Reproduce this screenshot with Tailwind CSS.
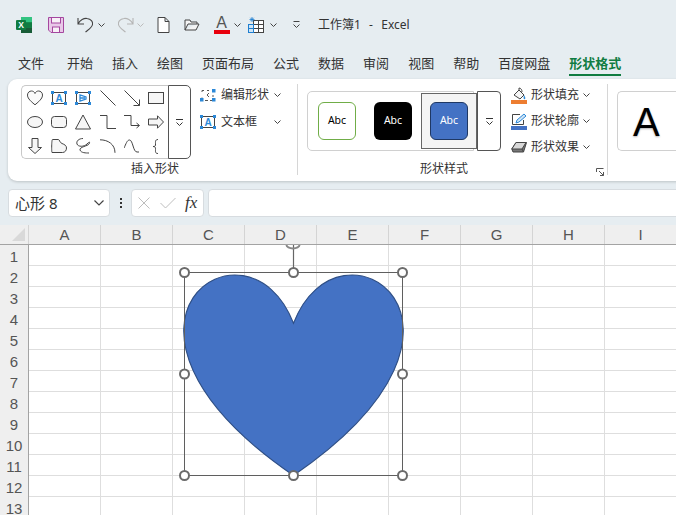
<!DOCTYPE html>
<html lang="zh-CN">
<head>
<meta charset="utf-8">
<script src="https://cdn.jsdelivr.net/npm/@tailwindcss/browser@4"></script>
</head>
<body class="m-0 overflow-hidden">
<div class="w-[676px] h-[515px] overflow-hidden flex flex-col bg-[#e6edf1] text-[#333] [font-family:'Noto_Sans','Noto_Sans_CJK_SC',sans-serif]">

  <!-- title bar -->
  <div class="h-[48px] flex items-center pl-[16px] pt-[1px] shrink-0">
    <svg class="w-[16px] h-[16px]" viewBox="0 0 16 16"><rect x="5" y="0" width="11" height="16" rx="1" fill="#21a366"/><rect x="5" y="0" width="11" height="5.3" fill="#33c481"/><rect x="5" y="5.3" width="11" height="5.4" fill="#107c41"/><rect x="5" y="10.7" width="11" height="5.3" fill="#185c37"/><rect x="0" y="3" width="10" height="10" rx="1" fill="#107c41"/><text x="5" y="11" font-size="8.5" font-weight="700" fill="#fff" text-anchor="middle" font-family="Liberation Sans">X</text></svg>
    <svg class="w-[16px] h-[16px] ml-[16px]" viewBox="0 0 16 16"><path d="M.5.500h15v15H3L.5 13z" fill="#e8c8e8" stroke="#a5479f"/><rect x="3.500" y=".5" width="9" height="5.500" fill="#f7f0f7" stroke="#a5479f"/><rect x="4.500" y="10" width="7" height="5.500" fill="#f7f0f7" stroke="#a5479f"/></svg>
    <svg class="w-[16px] h-[16px] ml-[13px]" viewBox="0 0 16 16" fill="none" stroke="#444" stroke-width="1.100"><path d="M1 1v6h6M1 7C3 3 7 1 10 1.500c4 .5 6 3 5.500 6-.5 3-4 5-7 7.500"/></svg>
    <svg class="w-[7px] h-[4px] ml-[5px]" viewBox="0 0 7 4" fill="none" stroke="#444"><path d="M.5.500 3.500 3.500 6.500.5"/></svg>
    <svg class="w-[16px] h-[16px] ml-[13px]" viewBox="0 0 16 16" fill="none" stroke="#b5b5b5" stroke-width="1.100"><path d="M15 1v6H9M15 7C13 3 9 1 6 1.500c-4 .5-6 3-5.500 6 .5 3 4 5 7 7.500"/></svg>
    <svg class="w-[7px] h-[4px] ml-[3px]" viewBox="0 0 7 4" fill="none" stroke="#bbb"><path d="M.5.500 3.500 3.500 6.500.5"/></svg>
    <svg class="w-[13px] h-[16px] ml-[13px]" viewBox="0 0 13 16" fill="#fff" stroke="#444"><path d="M1 .5h7l4 4v11H1zM8 .5v4h4"/></svg>
    <svg class="w-[16px] h-[12px] ml-[14px]" viewBox="0 0 16 12" fill="#f4f4f4" stroke="#444"><path d="M1 11V1h5l1 2h6v2M1 11h11l3-6H4z"/></svg>
    <div class="ml-[13px] w-[17px] h-[19px] flex flex-col items-center">
      <span class="text-[16px] leading-[15px] h-[15px] text-[#555] [font-family:'Liberation_Sans']">A</span>
      <span class="w-[16px] h-[4px] bg-[#e8000d]"></span>
    </div>
    <svg class="w-[7px] h-[4px] ml-[4px]" viewBox="0 0 7 4" fill="none" stroke="#444"><path d="M.5.500 3.500 3.500 6.500.5"/></svg>
    <svg class="w-[16px] h-[16px] ml-[7px]" viewBox="0 0 16 16"><rect x="5.500" y="3.500" width="10" height="12" fill="#fff" stroke="#444"/><path d="M5.500 7.500h10M5.500 11.500h10M10.500 3.500v12" stroke="#444" fill="none"/><rect x=".5" y="7.500" width="5" height="8" fill="#cfe4f5" stroke="#1f7fd0"/><path d="M.5 11.500h5" stroke="#1f7fd0"/><path d="M4 0v5M1.500 2.500h5M2.300.8l3.400 3.400M5.700.8 2.300 4.200" stroke="#1f7fd0" stroke-width=".8"/></svg>
    <svg class="w-[7px] h-[4px] ml-[6px]" viewBox="0 0 7 4" fill="none" stroke="#444"><path d="M.5.500 3.500 3.500 6.500.5"/></svg>
    <svg class="w-[7px] h-[7px] ml-[16px]" viewBox="0 0 7 7" fill="none" stroke="#444"><path d="M.5.500h6M.5 3.500 3.500 6.500 6.500 3.500"/></svg>
    <span class="ml-[18px] text-[12px] leading-[16px] whitespace-pre [word-spacing:1px]">工作簿1  -  Excel</span>
  </div>

  <!-- tabs -->
  <div class="h-[30px] flex pl-[18px] gap-[19px] shrink-0 text-[13px] leading-[30px]">
    <span class="mr-[4px]">文件</span><span>开始</span><span>插入</span><span>绘图</span><span>页面布局</span><span>公式</span><span>数据</span><span>审阅</span><span>视图</span><span>帮助</span><span>百度网盘</span>
    <span class="relative font-bold text-[#107c41]">形状格式<span class="absolute left-0 right-0 top-[26px] h-[2px] bg-[#107c41]"></span></span>
  </div>

  <!-- ribbon -->
  <div class="ml-[8px] mt-[1px] h-[102px] w-[680px] shrink-0 bg-white rounded-l-[9px] flex shadow-[0_1px_3px_rgba(0,0,0,0.18)] text-[12px]">

    <!-- insert shapes -->
    <div class="w-[289px] flex flex-col pl-[13px] pt-[6px] shrink-0">
      <div class="flex h-[74px]">
        <div class="w-[170px] h-[74px] flex shrink-0">
          <div class="w-[147px] h-[74px] border border-r-0 border-[#c8c8c8] rounded-l-[5px] grid grid-cols-6 grid-rows-3 pl-[1px] place-items-center">
            <svg class="w-[16px] h-[16px]" viewBox="0 0 16 16" fill="#fafafa" stroke="#444"><path d="M8 14.800C2 10 .5 7.500.5 5 .5 2.500 2.500 1 4.500 1 6 1 7.500 2 8 3.500 8.500 2 10 1 11.500 1c2 0 4 1.500 4 4 0 2.500-1.500 5-7.500 9.800z"/></svg>
            <svg class="w-[16px] h-[14px]" viewBox="0 0 16 14"><rect x="1.500" y="1.500" width="13" height="11" fill="#fff" stroke="#444"/><text x="8" y="10.500" font-size="10" font-weight="700" fill="#2b88d8" text-anchor="middle" font-family="Liberation Sans">A</text><path fill="#2b88d8" d="M0 0h3v3H0zM13 0h3v3h-3zM0 11h3v3H0zM13 11h3v3h-3z"/></svg>
            <svg class="w-[16px] h-[14px]" viewBox="0 0 16 14"><rect x="1.500" y="1.500" width="13" height="11" fill="#fff" stroke="#444"/><path d="M5 4v6l6-2v-2zM5 7h5" fill="none" stroke="#2b88d8" stroke-width="1.300"/><path fill="#2b88d8" d="M0 0h3v3H0zM13 0h3v3h-3zM0 11h3v3H0zM13 11h3v3h-3z"/></svg>
            <svg class="w-[16px] h-[16px]" viewBox="0 0 16 16" stroke="#444"><path d="M.5.500 15.500 15.500"/></svg>
            <svg class="w-[16px] h-[16px]" viewBox="0 0 16 16" stroke="#444" fill="none"><path d="M.5.500 15.500 15.500M15.500 9.500v6h-6"/></svg>
            <svg class="w-[16px] h-[12px]" viewBox="0 0 16 12"><rect x=".5" y=".5" width="15" height="11" fill="#f6f6f6" stroke="#444"/></svg>

            <svg class="w-[16px] h-[12px]" viewBox="0 0 16 12"><ellipse cx="8" cy="6" rx="7.500" ry="5.500" fill="#f6f6f6" stroke="#444"/></svg>
            <svg class="w-[16px] h-[12px]" viewBox="0 0 16 12"><rect x=".5" y=".5" width="15" height="11" rx="3" fill="#f6f6f6" stroke="#444"/></svg>
            <svg class="w-[16px] h-[16px]" viewBox="0 0 16 16"><path d="M8 1 15.500 15H.5z" fill="#f6f6f6" stroke="#444"/></svg>
            <svg class="w-[16px] h-[14px]" viewBox="0 0 16 14" fill="none" stroke="#444"><path d="M0 .5h7v13h9"/></svg>
            <svg class="w-[16px] h-[14px]" viewBox="0 0 16 14" fill="none" stroke="#444"><path d="M0 .5h7v10h8M12.500 8l3 2.500-3 2.500"/></svg>
            <svg class="w-[16px] h-[14px]" viewBox="0 0 16 14"><path d="M.5 4h9V.8L15.500 7l-6 6.200V10h-9z" fill="#f6f6f6" stroke="#444"/></svg>

            <svg class="w-[14px] h-[16px]" viewBox="0 0 14 16"><path d="M4 .5h6v9h3.500L7 15.500.5 9.500H4z" fill="#f6f6f6" stroke="#444"/></svg>
            <svg class="w-[16px] h-[14px]" viewBox="0 0 16 14"><path d="M1.500.5h6c1 0 1 3 3.500 4 2.500 1 4.500 2 4.500 4.500 0 2.500-1.500 4.500-4 4.500H1c-.5 0-.5-13 .5-13z" fill="#f6f6f6" stroke="#444"/></svg>
            <svg class="w-[16px] h-[16px]" viewBox="0 0 16 16" fill="none" stroke="#444"><path d="M8 .5C4 .5 1 3 2 6s7 3 10 0 3-2 2 0-10 3-9 6 6 3 9 3"/></svg>
            <svg class="w-[16px] h-[14px]" viewBox="0 0 16 14" fill="none" stroke="#444"><path d="M0 .8c8 0 15 4.500 15 13"/></svg>
            <svg class="w-[16px] h-[14px]" viewBox="0 0 16 14" fill="none" stroke="#444"><path d="M0 9C2 5 3 1 5.500 1 9 1 9 13 13 13h2"/></svg>
            <svg class="w-[7px] h-[15px]" viewBox="0 0 7 15" fill="none" stroke="#444"><path d="M6 .5c-3 0-2.500 2.500-2.500 4.500S3.500 7.500 1 7.500c2.500 0 2.500 1 2.500 3s-.5 4 2.500 4"/></svg>
          </div>
          <div class="w-[23px] h-[74px] border border-[#555] rounded-r-[5px] flex items-center justify-center shrink-0">
            <svg class="w-[7px] h-[7px]" viewBox="0 0 7 7" fill="none" stroke="#333"><path d="M0 .5h7M.5 3.500 3.500 6.500 6.500 3.500"/></svg>
          </div>
        </div>
        <div class="ml-[9px] flex flex-col shrink-0">
          <div class="flex items-center h-[18px] mt-[1px]">
            <svg class="w-[16px] h-[13px]" viewBox="0 0 16 13"><path d="M2 3V1.500h2M7 1.500h2M2 8.500v2M5 11.500h3M10 11.500h2M13 6V8M9 4 7 6l2 2" fill="none" stroke="#555"/><path fill="#2b88d8" d="M0 9h3.500v3.500H0zM12 0h3.500v3.500H12zM12 9h3.500v3.500H12z"/></svg>
            <span class="ml-[5px] leading-[18px]">编辑形状</span>
            <svg class="w-[7px] h-[4px] ml-[5px]" viewBox="0 0 7 4" fill="none" stroke="#444"><path d="M.5.500 3.500 3.500 6.500.5"/></svg>
          </div>
          <div class="flex items-center h-[18px] mt-[9px]">
            <svg class="w-[16px] h-[14px]" viewBox="0 0 16 14"><rect x="1.500" y="1.500" width="13" height="11" fill="#fff" stroke="#444"/><text x="8" y="10.500" font-size="10" font-weight="700" fill="#2b88d8" text-anchor="middle" font-family="Liberation Sans">A</text><path fill="#2b88d8" d="M0 0h3v3H0zM13 0h3v3h-3zM0 11h3v3H0zM13 11h3v3h-3z"/></svg>
            <span class="ml-[5px] leading-[18px]">文本框</span>
            <svg class="w-[7px] h-[4px] ml-[17px]" viewBox="0 0 7 4" fill="none" stroke="#444"><path d="M.5.500 3.500 3.500 6.500.5"/></svg>
          </div>
        </div>
      </div>
      <div class="pl-[110px] mt-[2px] leading-[16px]">插入形状</div>
    </div>
    <div class="w-px h-[91px] mt-[5px] bg-[#d6d6d6] shrink-0"></div>

    <!-- shape styles -->
    <div class="w-[309px] flex flex-col pl-[9px] shrink-0 relative">
      <div class="flex h-[78px] pt-[12px]">
        <div class="w-[167px] h-[60px] border border-[#d0d0d0] rounded-l-[5px] flex items-center pl-[10px] relative shrink-0">
          <span class="w-[38px] h-[38px] rounded-[6px] border border-[#70ad47] bg-white flex items-center justify-center text-[10.5px] text-black">Abc</span>
          <span class="ml-[18px] w-[38px] h-[38px] rounded-[6px] bg-black flex items-center justify-center text-[10.5px] text-white">Abc</span>
          <span class="absolute left-[113px] top-[1px] w-[56px] h-[56px] border border-[#666] bg-[#f4f4f4]"></span>
          <span class="relative ml-[18px] w-[38px] h-[38px] rounded-[6px] bg-[#4472c4] border border-[#1f3864] flex items-center justify-center text-[10.5px] text-white">Abc</span>
        </div>
        <div class="w-[24px] h-[60px] ml-[3px] border border-[#555] rounded-r-[4px] flex items-center justify-center shrink-0">
          <svg class="w-[7px] h-[7px]" viewBox="0 0 7 7" fill="none" stroke="#333"><path d="M0 .5h7M.5 3.500 3.500 6.500 6.500 3.500"/></svg>
        </div>
        <div class="ml-[10px] flex flex-col gap-[8px] -mt-[5px] shrink-0">
          <div class="flex items-center h-[18px]">
            <svg class="w-[16px] h-[17px]" viewBox="0 0 16 17"><path d="M3 8 8 3l5 5-4 4z" fill="#f5f5f5" stroke="#444"/><path d="M8 3V1c2 0 3 2 3 4" fill="none" stroke="#444"/><path d="M13 8c1 2 2 3 1 4s-2 0-1-4" fill="#2b88d8"/><rect y="13" width="16" height="4" fill="#ed7d31"/></svg>
            <span class="ml-[4px] leading-[18px]">形状填充</span>
            <svg class="w-[7px] h-[4px] ml-[4px]" viewBox="0 0 7 4" fill="none" stroke="#444"><path d="M.5.500 3.500 3.500 6.500.5"/></svg>
          </div>
          <div class="flex items-center h-[18px]">
            <svg class="w-[16px] h-[17px]" viewBox="0 0 16 17"><path d="M9 1.500H1.500v10h11V7" fill="none" stroke="#444"/><path d="M5 10l1-3 7-6 2 2-7 6z" fill="#cfe4f5" stroke="#2b88d8"/><rect y="13" width="16" height="4" fill="#4472c4"/></svg>
            <span class="ml-[4px] leading-[18px]">形状轮廓</span>
            <svg class="w-[7px] h-[4px] ml-[4px]" viewBox="0 0 7 4" fill="none" stroke="#444"><path d="M.5.500 3.500 3.500 6.500.5"/></svg>
          </div>
          <div class="flex items-center h-[18px]">
            <svg class="w-[16px] h-[13px]" viewBox="0 0 16 13"><path d="M.8 8 5 1.500h10.500l-3 9.500H2z" fill="#777" stroke="#444"/><path d="M.8 8 5 1.500h10l-4 6.500z" fill="#d8d8d8" stroke="#444"/><path d="M11 8l1.500 3" stroke="#444"/></svg>
            <span class="ml-[4px] leading-[18px]">形状效果</span>
            <svg class="w-[7px] h-[4px] ml-[4px]" viewBox="0 0 7 4" fill="none" stroke="#444"><path d="M.5.500 3.500 3.500 6.500.5"/></svg>
          </div>
        </div>
      </div>
      <div class="pl-[113px] mt-[4px] leading-[16px]">形状样式</div>
      <svg class="absolute left-[298px] top-[89px] w-[8px] h-[8px]" viewBox="0 0 8 8" fill="none" stroke="#555"><path d="M.5 4V.5H7.500M3 3l4.500 4.500M7.500 4v3.500H4"/></svg>
    </div>
    <div class="w-px h-[91px] mt-[5px] bg-[#d6d6d6] shrink-0"></div>

    <!-- wordart -->
    <div class="pl-[9px] pt-[12px]">
      <div class="w-[80px] h-[60px] border border-r-0 border-[#d0d0d0] rounded-l-[5px] pl-[15px] text-[40px] leading-[60px] text-black [text-shadow:0_1px_2px_rgba(0,0,0,0.3)] [font-family:'Liberation_Sans']">A</div>
    </div>
  </div>

  <!-- formula bar -->
  <div class="h-[28px] mt-[8px] ml-[8px] w-[680px] flex shrink-0">
    <div class="w-[102px] h-[28px] bg-white border border-[#d7dce0] rounded-[4px] flex items-center pl-[6px] pr-[5px] justify-between text-[15px] shrink-0">
      <span>心形 8</span>
      <svg class="w-[10px] h-[6px]" viewBox="0 0 10 6" fill="none" stroke="#444" stroke-width="1.200"><path d="M.5.500 5 5 9.500.5"/></svg>
    </div>
    <div class="w-[21px] flex flex-col items-center justify-center gap-[2px] shrink-0">
      <span class="w-[2px] h-[2px] bg-[#333]"></span><span class="w-[2px] h-[2px] bg-[#333]"></span><span class="w-[2px] h-[2px] bg-[#333]"></span>
    </div>
    <div class="w-[73px] h-[28px] bg-white border border-[#d7dce0] rounded-[4px] flex items-center pl-[6px] shrink-0">
      <svg class="w-[12px] h-[12px]" viewBox="0 0 12 12" stroke="#bdbdbd" fill="none"><path d="M.5.500 11.500 11.500M11.500.5.500 11.500"/></svg>
      <svg class="w-[16px] h-[12px] ml-[10px]" viewBox="0 0 16 12" stroke="#bdbdbd" fill="none"><path d="M.5 6 5.500 11 15.500 1"/></svg>
      <span class="ml-[9px] text-[17px] italic leading-[20px] text-[#333] [font-family:'Liberation_Serif']">fx</span>
    </div>
    <div class="ml-[4px] flex-1 h-[28px] bg-white border border-[#d7dce0] rounded-[4px]"></div>
  </div>

  <!-- sheet -->
  <div class="mt-[8px] flex-1 bg-white relative flex flex-col overflow-hidden [font-family:'Liberation_Sans']">
    <div class="h-[20px] flex bg-[#efefef] border-b border-[#a3a3a3] text-[15px] leading-[20px] text-[#555] shrink-0">
      <div class="w-[28px] border-r border-[#d4d4d4] box-content relative shrink-0">
        <svg class="absolute right-[3px] bottom-[3px] w-[13px] h-[13px]" viewBox="0 0 13 13"><path d="M13 0v13H0z" fill="#d9d9d9"/></svg>
      </div>
      <div class="w-[72px] border-r border-[#d4d4d4] text-center shrink-0">A</div>
      <div class="w-[72px] border-r border-[#d4d4d4] text-center shrink-0">B</div>
      <div class="w-[72px] border-r border-[#d4d4d4] text-center shrink-0">C</div>
      <div class="w-[72px] border-r border-[#d4d4d4] text-center shrink-0">D</div>
      <div class="w-[72px] border-r border-[#d4d4d4] text-center shrink-0">E</div>
      <div class="w-[72px] border-r border-[#d4d4d4] text-center shrink-0">F</div>
      <div class="w-[72px] border-r border-[#d4d4d4] text-center shrink-0">G</div>
      <div class="w-[72px] border-r border-[#d4d4d4] text-center shrink-0">H</div>
      <div class="w-[72px] border-r border-[#d4d4d4] text-center shrink-0">I</div>
    </div>
    <div class="flex flex-1">
      <div class="w-[29px] bg-[#efefef] border-r border-[#a3a3a3] flex flex-col pt-[1px] text-[15px] leading-[21px] text-[#555] text-center shrink-0">
        <div class="h-[21px] shrink-0">1</div><div class="h-[21px] shrink-0">2</div><div class="h-[21px] shrink-0">3</div><div class="h-[21px] shrink-0">4</div><div class="h-[21px] shrink-0">5</div><div class="h-[21px] shrink-0">6</div><div class="h-[21px] shrink-0">7</div><div class="h-[21px] shrink-0">8</div><div class="h-[21px] shrink-0">9</div><div class="h-[21px] shrink-0">10</div><div class="h-[21px] shrink-0">11</div><div class="h-[21px] shrink-0">12</div><div class="h-[21px] shrink-0">13</div>
      </div>
      <div class="flex-1 bg-[linear-gradient(to_right,transparent_71px,#dedede_71px),linear-gradient(to_bottom,transparent_20px,#dedede_20px)] bg-[length:72px_21px]"></div>
    </div>

    <!-- selected heart, over the grid -->
    <svg class="absolute left-0 top-0 w-[676px] h-[290px]" viewBox="0 225 676 290" fill="none">
      <path d="M293.500 245V272.500" stroke="#666" stroke-width="1.200"/>
      <path d="M286.500 245a6.500 3.500 0 0 0 13 0" stroke="#888" stroke-width="2"/>
      <path d="M293.500 323.250C338.900 204.800 516 323.250 293.500 475.500 71 323.250 248.100 204.800 293.500 323.250Z" fill="#4472c4" stroke="#2f4f85" stroke-width="1.100"/>
      <rect x="184.500" y="272.500" width="218" height="203" stroke="#5f5f5f" stroke-width="1"/>
      <g fill="#fff" stroke="#6a6a6a" stroke-width="2">
        <circle cx="184.500" cy="272.500" r="4.500"/><circle cx="293.500" cy="272.500" r="4.500"/><circle cx="402.500" cy="272.500" r="4.500"/>
        <circle cx="184.500" cy="374" r="4.500"/><circle cx="402.500" cy="374" r="4.500"/>
        <circle cx="184.500" cy="475.500" r="4.500"/><circle cx="293.500" cy="475.500" r="4.500"/><circle cx="402.500" cy="475.500" r="4.500"/>
      </g>
    </svg>
  </div>
</div>
</body>
</html>
